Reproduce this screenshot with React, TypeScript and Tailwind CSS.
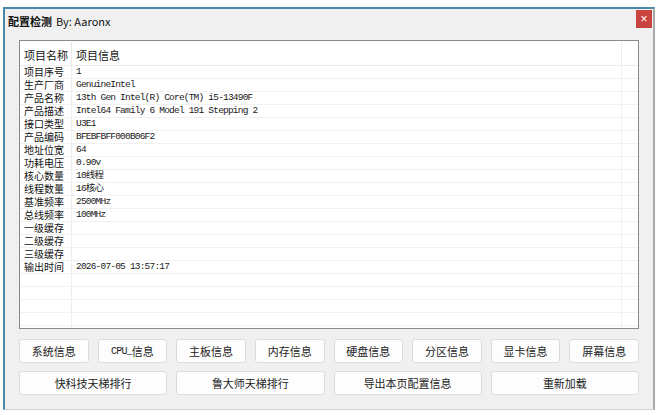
import React from "react";

const rows: [string, string][] = [
  ["项目序号", "1"],
  ["生产厂商", "GenuineIntel"],
  ["产品名称", "13th Gen Intel(R) Core(TM) i5-13490F"],
  ["产品描述", "Intel64 Family 6 Model 191 Stepping 2"],
  ["接口类型", "U3E1"],
  ["产品编码", "BFEBFBFF000B06F2"],
  ["地址位宽", "64"],
  ["功耗电压", "0.90v"],
  ["核心数量", "10线程"],
  ["线程数量", "16核心"],
  ["基准频率", "2500MHz"],
  ["总线频率", "100MHz"],
  ["一级缓存", ""],
  ["二级缓存", ""],
  ["三级缓存", ""],
  ["输出时间", "2026-07-05 13:57:17"],
  ["", ""],
  ["", ""],
  ["", ""],
  ["", ""],
  ["", ""],
];

const cjk = "font-['Noto_Sans_CJK_SC','Microsoft_YaHei',sans-serif]";
const mono = "font-['Liberation_Mono','Noto_Sans_CJK_SC',monospace]";

function Btn({ label }: { label: React.ReactNode }) {
  return (
    <div
      className={`h-[24px] flex items-center justify-center rounded-[3px] border border-[#dcdcdc] bg-[#fdfdfd] text-[11px] text-[#222] ${cjk}`}
    >
      {label}
    </div>
  );
}

export default function App() {
  return (
    <div className="w-[660px] h-[415px] bg-white overflow-hidden pt-[7px] pl-[3px]">
      <div className="w-[652px] h-[403px] flex flex-col bg-[#f0f0f0] border-t-2 border-l-2 border-[#4a87a8] border-r-2 border-r-[#a9a9a9] border-b border-b-[#d0d0d0]">
        <div className="h-[31px] flex items-start justify-between pl-[3px] pr-[1px]">
          <div className={`mt-[4px] text-[11px] text-[#111] ${cjk}`}>
            <span className="font-semibold">配置检测</span>
            <span className="ml-[4px]">By: Aaronx</span>
          </div>
          <div className="mt-[1px] w-[16px] h-[18px] bg-[#c9443f] flex items-center justify-center text-white text-[12px] leading-none font-['Liberation_Sans',sans-serif]">
            ×
          </div>
        </div>
        <div className="px-[14px] flex flex-col">
          <div className="h-[289px] border border-[#8a8a8a] bg-white overflow-hidden pt-[1px]">
            <div className="flex h-[24px] border-b border-[#ececec]">
              <div className={`w-[52px] shrink-0 pl-[4px] pt-[3px] flex items-center text-[11px] text-[#111] border-r border-[#e6e6e6] ${cjk}`}>
                项目名称
              </div>
              <div className={`w-[550px] shrink-0 pl-[4px] pt-[3px] flex items-center text-[11px] text-[#111] border-r border-[#ededed] ${cjk}`}>
                项目信息
              </div>
            </div>
            {rows.map(([k, v], i) => (
              <div key={i} className="flex h-[13px] border-b border-[#f1f1f1]">
                <div className={`w-[52px] shrink-0 pl-[4px] flex items-center text-[10px] leading-none text-[#111] border-r border-[#ececec] ${cjk}`}>
                  {k}
                </div>
                <div className={`w-[550px] shrink-0 pl-[4px] flex items-center text-[9.5px] tracking-[-0.8px] leading-none text-[#1a1a1a] border-r border-[#f0f0f0] ${mono}`}>
                  {v}
                </div>
              </div>
            ))}
          </div>
          <div className="mt-[10px] grid grid-cols-8 gap-x-[9px]">
            <Btn label="系统信息" />
            <Btn label={<><span className={`${mono} text-[10px] tracking-[-0.8px]`}>CPU_</span>信息</>} />
            <Btn label="主板信息" />
            <Btn label="内存信息" />
            <Btn label="硬盘信息" />
            <Btn label="分区信息" />
            <Btn label="显卡信息" />
            <Btn label="屏幕信息" />
          </div>
          <div className="mt-[8px] grid grid-cols-4 gap-x-[9px]">
            <Btn label="快科技天梯排行" />
            <Btn label="鲁大师天梯排行" />
            <Btn label="导出本页配置信息" />
            <Btn label="重新加载" />
          </div>
        </div>
      </div>
    </div>
  );
}
